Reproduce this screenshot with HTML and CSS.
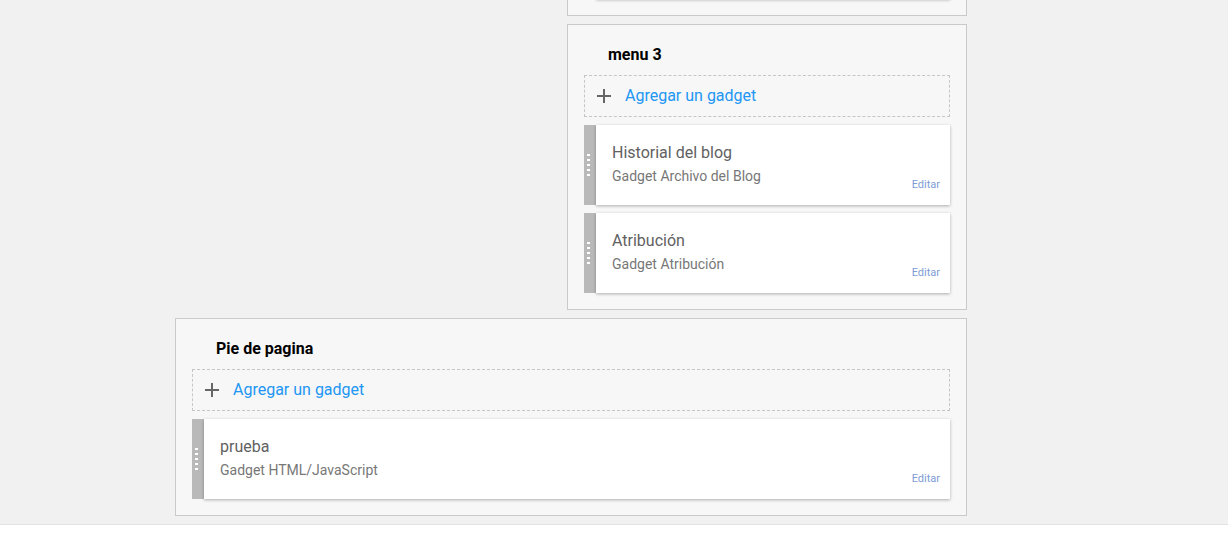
FILE: index.html
```html
<!DOCTYPE html>
<html lang="es">
<head>
<meta charset="utf-8">
<title>Diseño</title>
<link rel="stylesheet" href="styles.css">
</head>
<body>
<div class="layout">
  <div class="column">
    <section class="section section-top">
      <div class="gadget">
        <div class="grip"><i></i><i></i><i></i><i></i><i></i></div>
        <div class="gadget-body gadget-blank"></div>
      </div>
    </section>

    <section class="section">
      <h2 class="section-title">menu 3</h2>
      <a class="add-gadget" href="#">
        <svg class="plus" width="14" height="14" viewBox="0 0 14 14"><path d="M7 0v14M0 7h14" stroke="#666" stroke-width="2" fill="none"/></svg>
        <span>Agregar un gadget</span>
      </a>
      <div class="gadget">
        <div class="grip"><i></i><i></i><i></i><i></i><i></i></div>
        <div class="gadget-body">
          <div class="gadget-text">
            <div class="gadget-name">Historial del blog</div>
            <div class="gadget-type">Gadget Archivo del Blog</div>
          </div>
          <a class="edit" href="#">Editar</a>
        </div>
      </div>
      <div class="gadget">
        <div class="grip"><i></i><i></i><i></i><i></i><i></i></div>
        <div class="gadget-body">
          <div class="gadget-text">
            <div class="gadget-name">Atribución</div>
            <div class="gadget-type">Gadget Atribución</div>
          </div>
          <a class="edit" href="#">Editar</a>
        </div>
      </div>
    </section>
  </div>

  <section class="section section-wide">
    <h2 class="section-title">Pie de pagina</h2>
    <a class="add-gadget" href="#">
      <svg class="plus" width="14" height="14" viewBox="0 0 14 14"><path d="M7 0v14M0 7h14" stroke="#666" stroke-width="2" fill="none"/></svg>
      <span>Agregar un gadget</span>
    </a>
    <div class="gadget">
      <div class="grip"><i></i><i></i><i></i><i></i><i></i></div>
      <div class="gadget-body">
        <div class="gadget-text">
          <div class="gadget-name">prueba</div>
          <div class="gadget-type">Gadget HTML/JavaScript</div>
        </div>
        <a class="edit" href="#">Editar</a>
      </div>
    </div>
  </section>
</div>
<footer class="bottom-bar"></footer>
</body>
</html>
```

FILE: styles.css
```css
* { box-sizing: border-box; }

html, body {
  margin: 0;
  padding: 0;
}

body {
  background: #f1f1f1;
  font-family: Roboto, "Liberation Sans", Arial, sans-serif;
  overflow: hidden;
}

.layout {
  width: 792px;
  margin-left: 175px;
  display: flex;
  flex-direction: column;
  gap: 8px;
}

.column {
  width: 400px;
  margin-left: auto;
  display: flex;
  flex-direction: column;
  gap: 8px;
}

.section {
  background: #f7f7f7;
  border: 1px solid #cacaca;
  padding: 0 16px 16px;
  display: flex;
  flex-direction: column;
  gap: 8px;
}

.section-top {
  margin-top: -98px;
  padding-top: 16px;
}

.section-title {
  margin: 0 0 -8px;
  padding: 20px 24px 10px;
  font-size: 16px;
  line-height: 20px;
  font-weight: 700;
  color: #000;
}

.add-gadget {
  height: 42px;
  border: 1px dashed #c6c6c6;
  display: flex;
  align-items: center;
  padding: 0 0 1px 12px;
  gap: 14px;
  text-decoration: none;
  color: #2196f3;
  font-size: 16px;
}

.plus { flex: none; }

.gadget {
  display: flex;
  height: 80px;
}

.grip {
  width: 12px;
  flex: none;
  background: #b9b9b9;
  display: flex;
  flex-direction: column;
  justify-content: center;
  gap: 3px;
  padding-left: 3px;
}

.grip i {
  display: block;
  width: 3px;
  height: 2px;
  background: #fff;
}

.gadget-body {
  flex: 1;
  background: #fff;
  box-shadow: 0 1px 3px rgba(0, 0, 0, 0.3);
  display: flex;
  align-items: flex-end;
  justify-content: space-between;
  padding: 18px 10px 13px 16px;
}

.gadget-text {
  align-self: flex-start;
}

.gadget-name {
  font-size: 16px;
  line-height: 20px;
  color: #616161;
}

.gadget-type {
  margin-top: 3px;
  font-size: 14px;
  line-height: 20px;
  color: #777;
}

.edit {
  font-size: 11px;
  line-height: 14px;
  color: #7e9cd6;
  text-decoration: none;
}

.bottom-bar {
  margin-top: 8px;
  height: 40px;
  background: #fff;
  border-top: 1px solid #e2e2e2;
}
```
